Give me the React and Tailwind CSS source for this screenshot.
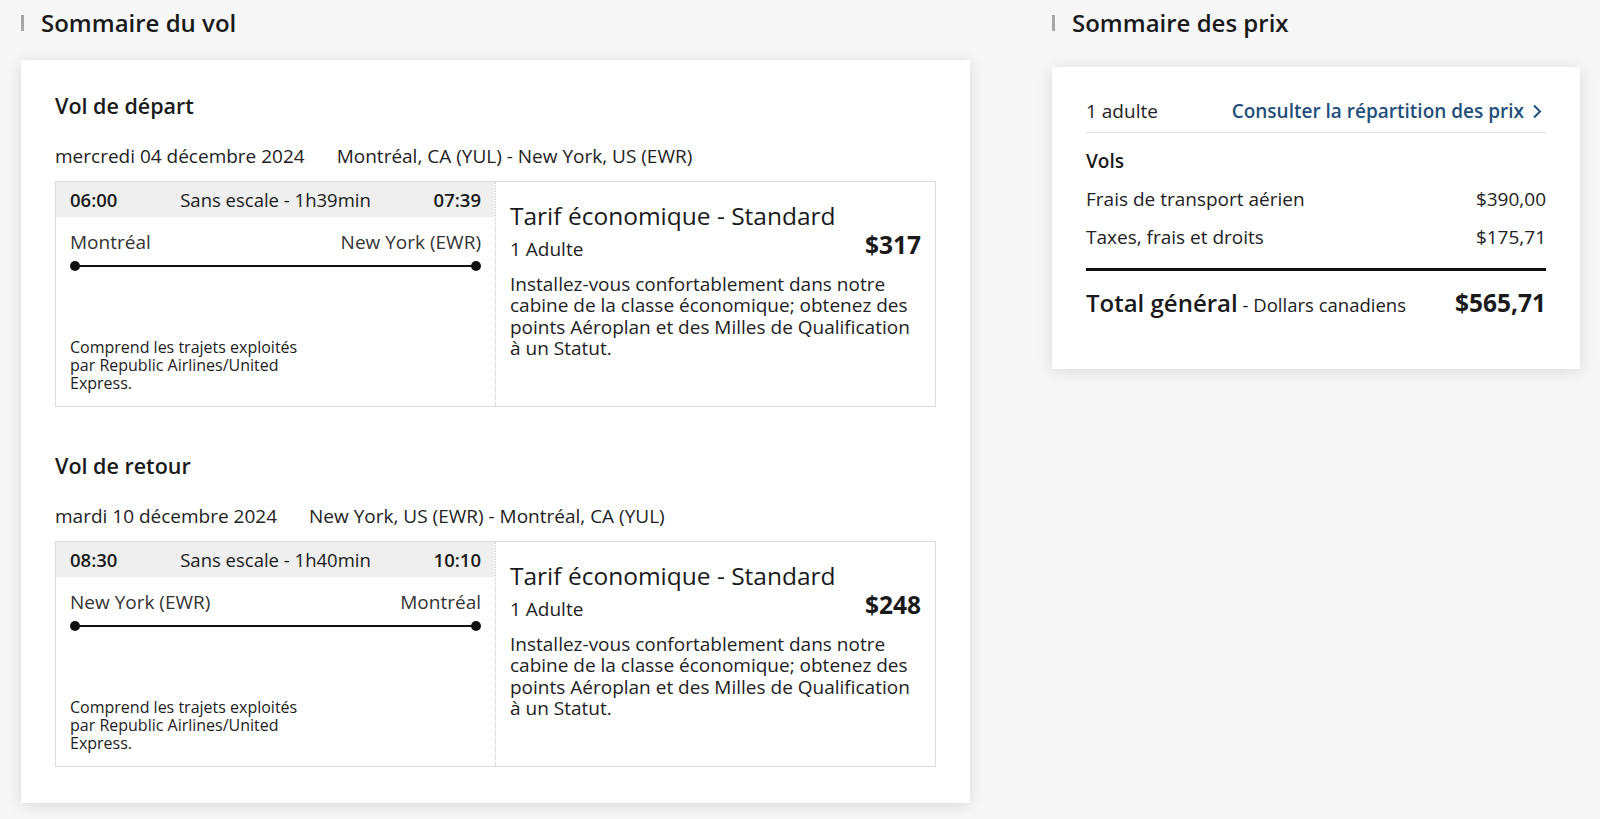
import React from "react";

const F = { fontFamily: '"Open Sans", "Noto Sans", sans-serif' };

function Header({ title }) {
  return (
    <div className="flex items-center h-[45px]">
      <div className="w-[3px] h-[16px] bg-[#a8a8a8] mr-[17px]" />
      <h2 className="text-[24px] font-semibold text-[#1a1a1a] leading-none">{title}</h2>
    </div>
  );
}

function Flight({ title, date, route, dep, arr, dur, from, to, price }) {
  return (
    <div>
      <h3 className="text-[21.5px] font-semibold text-[#1a1a1a] leading-[30px]">{title}</h3>
      <div className="flex gap-[32px] text-[19px] text-[#222] mt-[22px] leading-[26px]">
        <span>{date}</span>
        <span>{route}</span>
      </div>
      <div className="mt-[12px] flex border border-[#dcdcdc] h-[226px]">
        <div className="w-[440px] flex flex-col border-r border-dotted border-[#cfcfcf]">
          <div className="h-[35px] bg-[#efefef] flex items-center justify-between px-[14px] text-[18.5px] text-[#1a1a1a]">
            <span className="font-semibold">{dep}</span>
            <span>{dur}</span>
            <span className="font-semibold">{arr}</span>
          </div>
          <div className="px-[14px] mt-[12px] flex justify-between text-[19px] text-[#333] leading-[26px]">
            <span>{from}</span>
            <span>{to}</span>
          </div>
          <div className="mx-[19px] mt-[6px] relative h-[10px] flex items-center">
            <div className="absolute left-0 right-0 h-[2px] bg-[#111]" />
            <div className="absolute left-[-5px] w-[10px] h-[10px] rounded-full bg-[#111]" />
            <div className="absolute right-[-5px] w-[10px] h-[10px] rounded-full bg-[#111]" />
          </div>
          <div className="mt-auto mb-[14px] px-[14px] text-[16px] leading-[18px] text-[#222] w-[270px]">
            Comprend les trajets exploités par Republic Airlines/United Express.
          </div>
        </div>
        <div className="flex-1 pl-[14px] pr-[17px] pt-[18px]">
          <div className="text-[24.5px] text-[#1a1a1a] leading-[32px]">Tarif économique - Standard</div>
          <div className="flex justify-between items-end mt-[-4px] mr-[-3px]">
            <span className="text-[19px] text-[#222] leading-[26px]">1 Adulte</span>
            <span className="text-[24.5px] font-bold text-[#1a1a1a] leading-[34px]">{price}</span>
          </div>
          <p className="mt-[12px] text-[19px] leading-[21.4px] text-[#222]">
            Installez-vous confortablement dans notre cabine de la classe économique; obtenez des points Aéroplan et des Milles de Qualification à un Statut.
          </p>
        </div>
      </div>
    </div>
  );
}

export default function App() {
  return (
    <div style={F} className="w-[1600px] h-[819px] bg-[#f7f7f7] overflow-hidden">
      <div className="flex gap-[82px] pl-[21px]">
        <div className="w-[949px]">
          <Header title="Sommaire du vol" />
          <div className="mt-[15px] bg-white shadow-[0_2px_14px_rgba(0,0,0,0.13)] px-[34px] pt-[31px] pb-[36px]">
            <Flight
              title="Vol de départ"
              date="mercredi 04 décembre 2024"
              route="Montréal, CA (YUL) - New York, US (EWR)"
              dep="06:00"
              arr="07:39"
              dur="Sans escale - 1h39min"
              from="Montréal"
              to="New York (EWR)"
              price="$317"
            />
            <div className="h-[44px]" />
            <Flight
              title="Vol de retour"
              date="mardi 10 décembre 2024"
              route="New York, US (EWR) - Montréal, CA (YUL)"
              dep="08:30"
              arr="10:10"
              dur="Sans escale - 1h40min"
              from="New York (EWR)"
              to="Montréal"
              price="$248"
            />
          </div>
        </div>
        <div className="w-[528px]">
          <Header title="Sommaire des prix" />
          <div className="mt-[22px] bg-white shadow-[0_2px_14px_rgba(0,0,0,0.13)] px-[34px] pt-[30px] pb-[46px]">
            <div className="flex justify-between items-center pb-[7px] border-b border-[#e2e2e2] text-[19px] leading-[28px]">
              <span className="text-[#222]">1 adulte</span>
              <span className="text-[#1f4f7a] font-semibold flex items-center gap-[8px] mr-[4px]">
                Consulter la répartition des prix
                <svg width="10" height="15" viewBox="0 0 10 15" fill="none">
                  <path d="M2 1.5 L8 7.5 L2 13.5" stroke="#1f4f7a" strokeWidth="2" />
                </svg>
              </span>
            </div>
            <div className="mt-[14px] text-[19px] font-semibold text-[#1a1a1a] leading-[28px]">Vols</div>
            <div className="mt-[10px] flex justify-between text-[19px] text-[#222] leading-[28px]">
              <span>Frais de transport aérien</span>
              <span>$390,00</span>
            </div>
            <div className="mt-[10px] flex justify-between text-[19px] text-[#222] leading-[28px]">
              <span>Taxes, frais et droits</span>
              <span>$175,71</span>
            </div>
            <div className="mt-[17px] h-[3px] bg-[#111]" />
            <div className="mt-[15px] flex justify-between items-baseline leading-[34px]">
              <span className="text-[#1a1a1a]">
                <span className="text-[24px] font-semibold">Total général</span>
                <span className="text-[18.5px]"> - Dollars canadiens</span>
              </span>
              <span className="text-[24.5px] font-bold text-[#1a1a1a]">$565,71</span>
            </div>
          </div>
        </div>
      </div>
    </div>
  );
}
